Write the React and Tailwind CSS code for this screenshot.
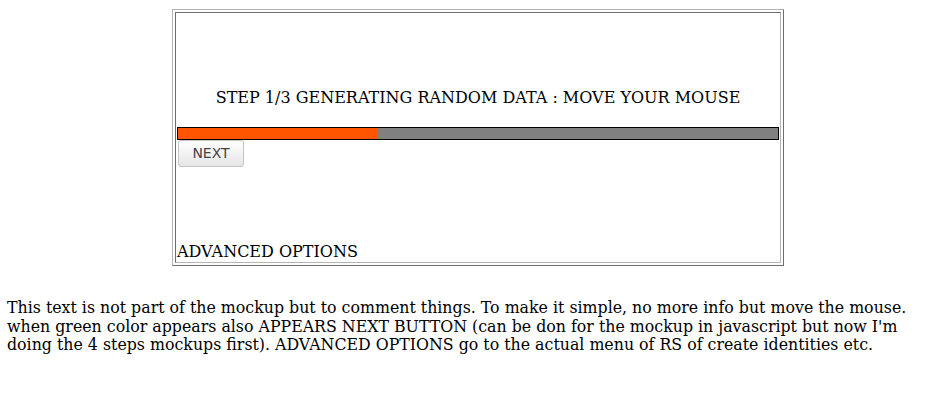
export default function App() {
  return (
    <div className="min-h-[408px] bg-white text-black" style={{ fontFamily: '"DejaVu Serif", serif' }}>
      <div className="pl-[172px] pt-[9px]">
        <div className="w-[612px] border border-t-[#b4b4b4] border-l-[#b4b4b4] border-b-[#6e6e6e] border-r-[#6e6e6e] p-[2px]">
          <div className="h-[251px] border border-t-[#6e6e6e] border-l-[#6e6e6e] border-b-[#b4b4b4] border-r-[#b4b4b4] p-px flex flex-col">
            <div className="pt-[75px] text-center text-[16px] leading-[18px]">
              STEP 1/3 GENERATING RANDOM DATA : MOVE YOUR MOUSE
            </div>
            <div className="mt-[20px] h-[13px] border border-black bg-[#808080] flex">
              <div className="w-[200px] bg-[#ff5500]" />
            </div>
            <div className="pl-px">
              <button
                className="h-[27px] w-[66px] rounded-[3px] border border-[#c4c4c4] bg-gradient-to-b from-white to-[#e6e6e6] text-[14px] text-[#444]"
                style={{ fontFamily: '"DejaVu Sans", sans-serif' }}
              >
                NEXT
              </button>
            </div>
            <div className="mt-auto text-[16px] leading-[18px]">ADVANCED OPTIONS</div>
          </div>
        </div>
      </div>
      <div className="pl-[7px] pt-[33px] text-[15.8px] leading-[18.5px]">
        This text is not part of the mockup but to comment things. To make it simple, no more info but move the mouse.
        <br />
        when green color appears also APPEARS NEXT BUTTON (can be don for the mockup in javascript but now I'm
        <br />
        doing the 4 steps mockups first). ADVANCED OPTIONS go to the actual menu of RS of create identities etc.
      </div>
    </div>
  );
}
